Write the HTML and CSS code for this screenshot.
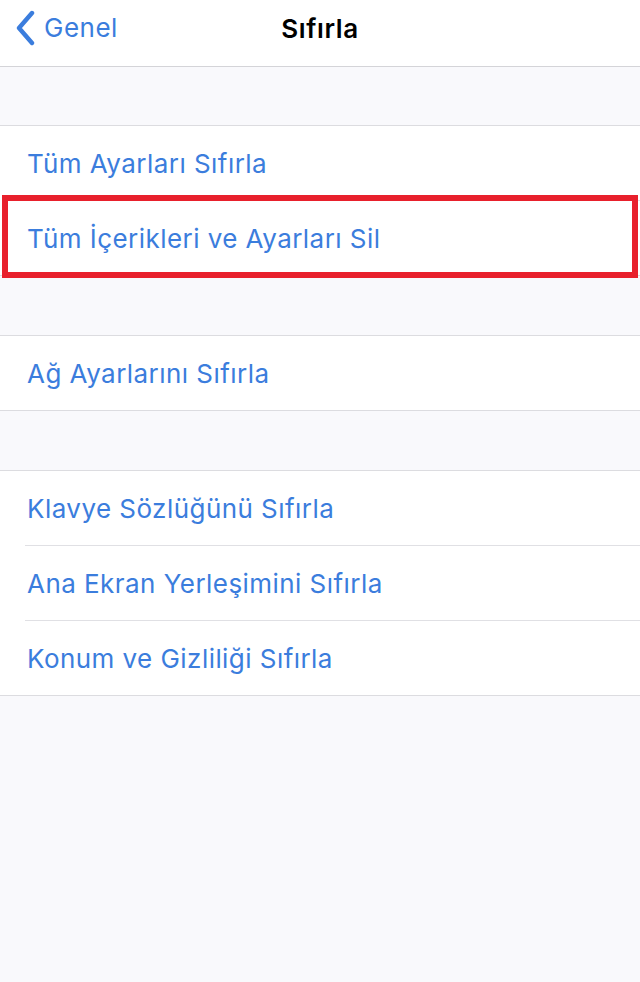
FILE: index.html
```html
<!DOCTYPE html>
<html lang="tr">
<head>
<meta charset="utf-8">
<title>Sıfırla</title>
<link rel="stylesheet" href="styles.css">
</head>
<body>
<div class="screen">
  <header class="nav">
    <div class="back">
      <svg class="chev" width="22" height="36" viewBox="0 0 22 36"><path d="M18 3 L5 18 L18 33" fill="none" stroke="#3b7ddd" stroke-width="4.4" stroke-linecap="round" stroke-linejoin="round"/></svg>
      <span class="back-label">Genel</span>
    </div>
    <h1 class="title">Sıfırla</h1>
  </header>
  <div class="gap first"></div>
  <div class="group">
    <div class="row">Tüm Ayarları Sıfırla</div>
    <div class="row highlight">Tüm İçerikleri ve Ayarları Sil</div>
  </div>
  <div class="gap"></div>
  <div class="group">
    <div class="row">Ağ Ayarlarını Sıfırla</div>
  </div>
  <div class="gap"></div>
  <div class="group">
    <div class="row">Klavye Sözlüğünü Sıfırla</div>
    <div class="row">Ana Ekran Yerleşimini Sıfırla</div>
    <div class="row">Konum ve Gizliliği Sıfırla</div>
  </div>
</div>
</body>
</html>
```
FILE: styles.css
```css
html, body {
  margin: 0;
  padding: 0;
  background: #f9f9fc;
}
.screen {
  width: 640px;
  min-height: 982px;
  background: #f9f9fc;
  font-family: Inter, Roboto, "Liberation Sans", sans-serif;
}
.nav {
  height: 66px;
  background: #ffffff;
  border-bottom: 1px solid #d4d4d8;
  position: relative;
  display: flex;
  align-items: center;
  justify-content: center;
}
.back {
  position: absolute;
  left: 14px;
  top: 10px;
  display: flex;
  align-items: center;
  gap: 8px;
}
.chev { display: block; }
.back-label {
  color: #3b7ddd;
  font-size: 26px;
  letter-spacing: 0.5px;
  margin-top: -2px;
}
.title {
  margin: 0;
  margin-top: -10px;
  font-size: 26px;
  font-weight: 600;
  color: #000;
  letter-spacing: 0.6px;
}
.gap {
  height: 59px;
}
.gap.first {
  height: 58px;
}
.group {
  background: #ffffff;
  border-top: 1px solid #dcdce0;
  border-bottom: 1px solid #dcdce0;
}
.row {
  height: 74px;
  display: flex;
  align-items: center;
  padding-left: 27px;
  color: #3b7ddd;
  font-size: 26px;
  letter-spacing: 0.45px;
  position: relative;
}
.row + .row {
  border-top: 1px solid transparent;
}
.row + .row::before {
  content: "";
  position: absolute;
  top: -1px;
  left: 25px;
  right: 0;
  height: 1px;
  background: #e0e0e4;
}
.highlight::after {
  content: "";
  position: absolute;
  top: -6px;
  bottom: -3px;
  left: 2px;
  right: 2px;
  border: 6px solid #e8202c;
  z-index: 2;
}
```
